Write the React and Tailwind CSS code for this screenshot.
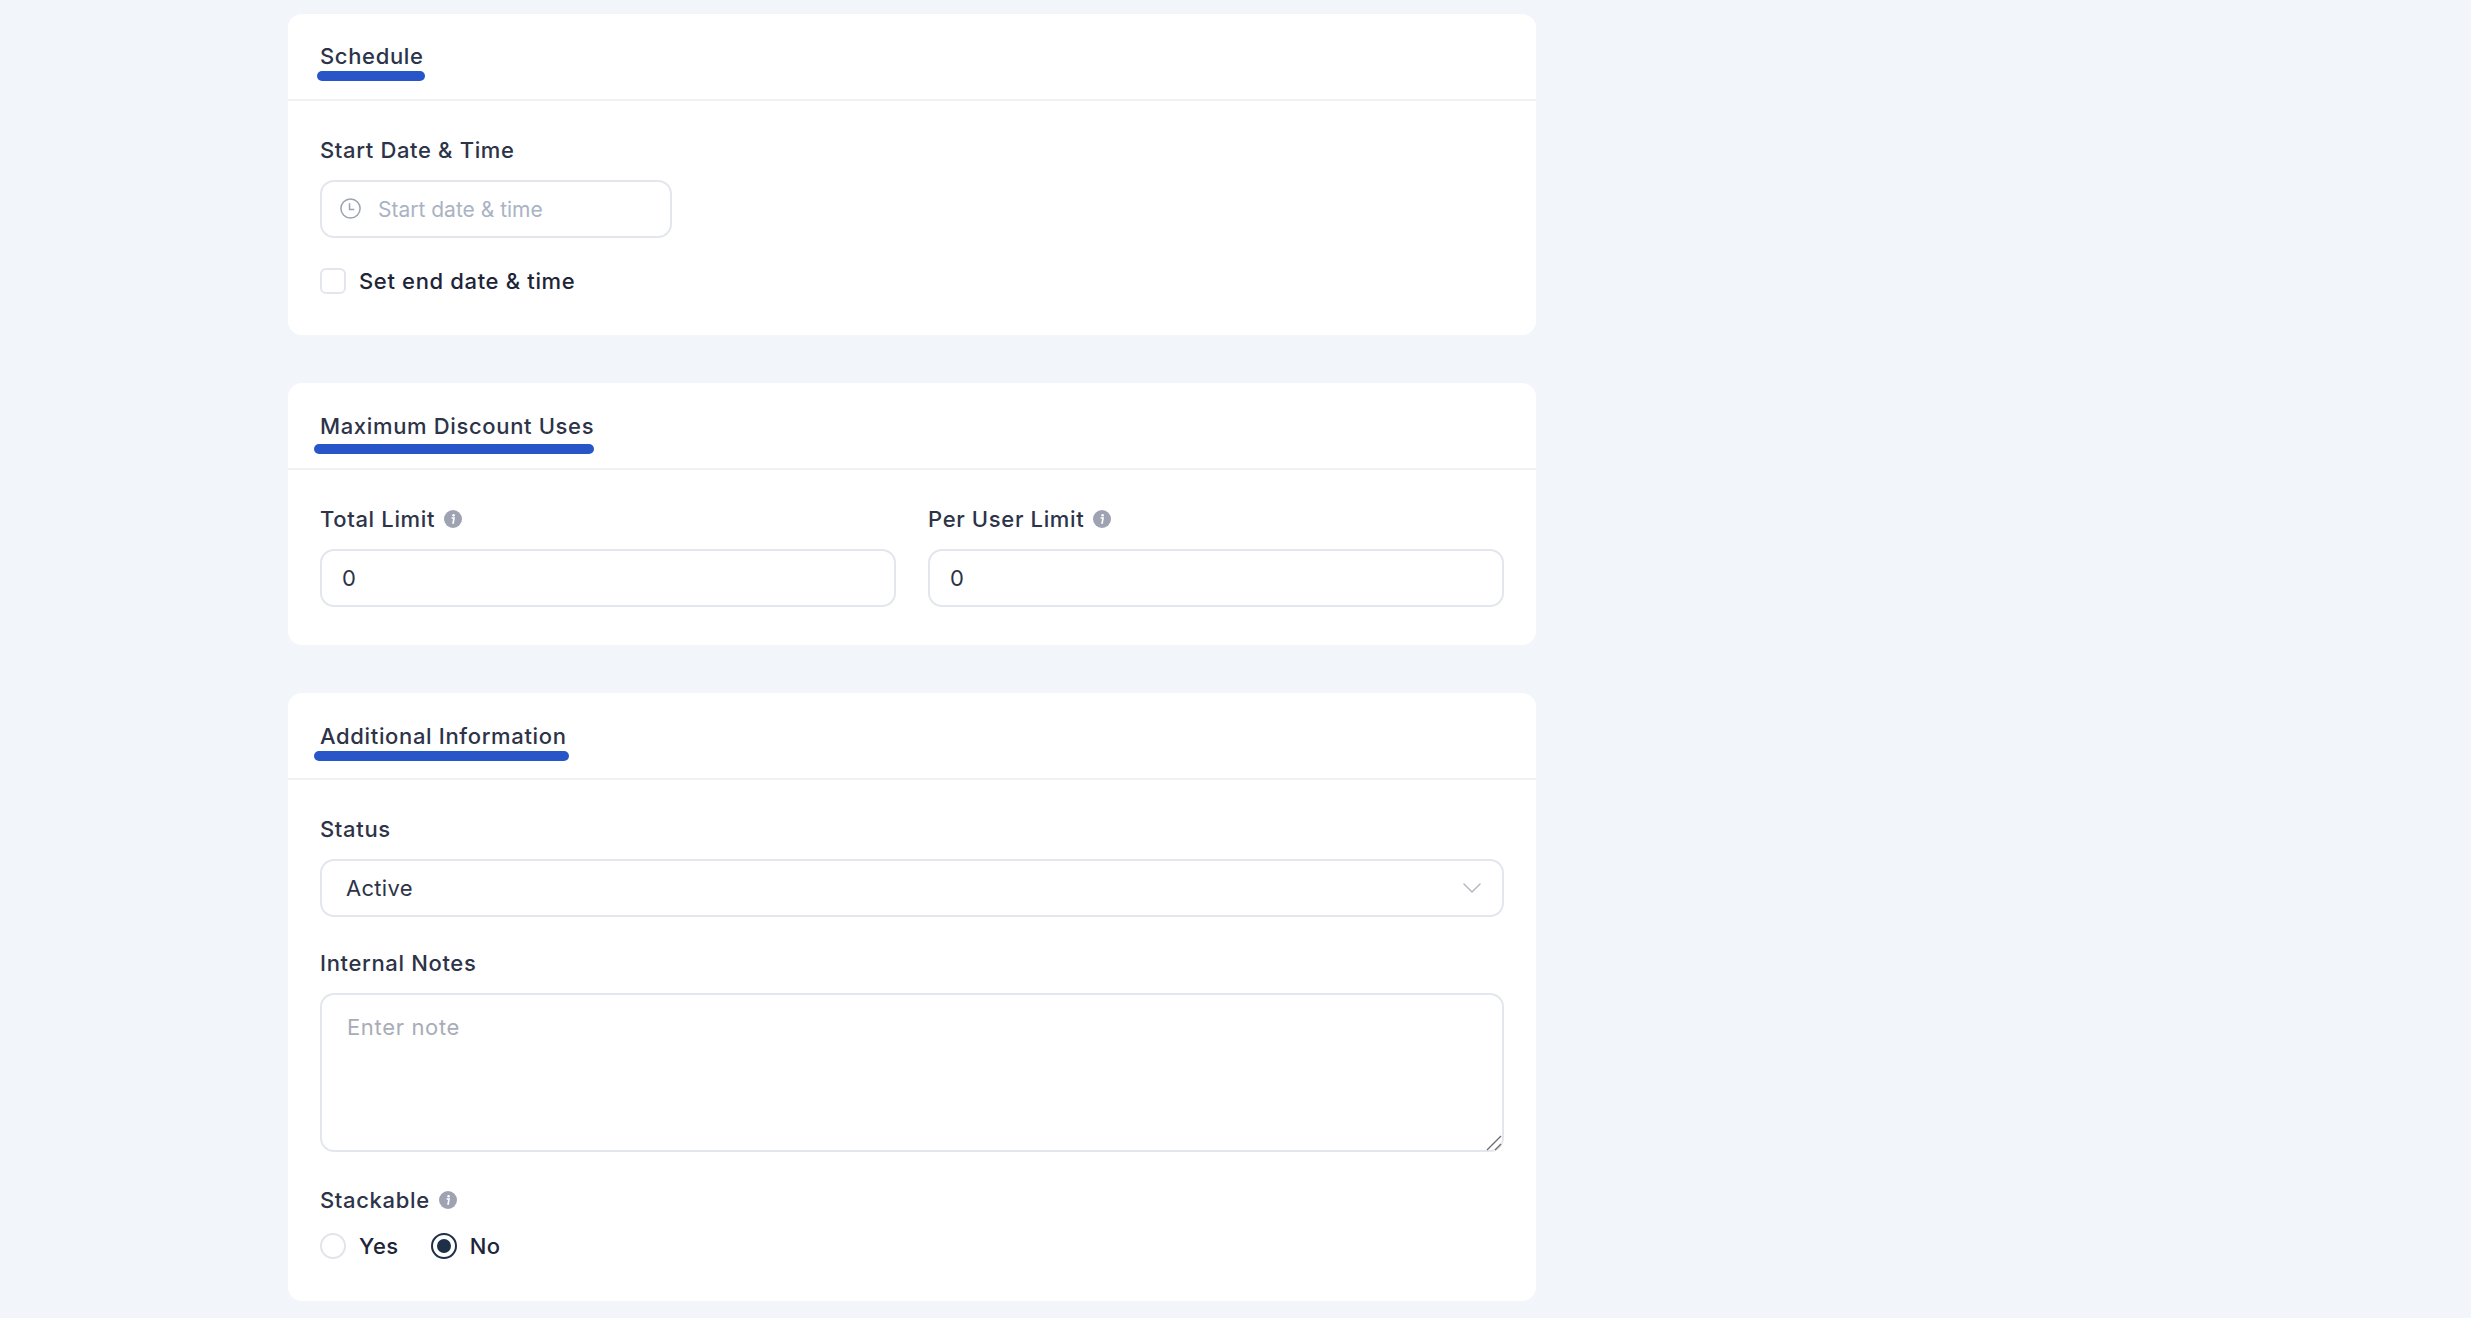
import React from "react";
import { ChevronDown } from "lucide-react";

function InfoIcon() {
  return (
    <svg viewBox="0 0 18 18" className="w-[18px] h-[18px] shrink-0 ml-[9px]">
      <circle cx="9" cy="9" r="9" fill="#9ea3b2" />
      <circle cx="9.6" cy="5.2" r="1.3" fill="#fff" />
      <path d="M7.6 8h2.5l-1 5h1" fill="none" stroke="#fff" strokeWidth="1.6" />
    </svg>
  );
}

function ClockIcon() {
  return (
    <svg
      viewBox="0 0 24 24"
      fill="none"
      stroke="#9ea3b2"
      strokeWidth="1.6"
      className="absolute left-[19px] top-[17px] w-[23px] h-[23px]"
    >
      <circle cx="12" cy="12" r="10" />
      <path d="M11 6.5v6.5h5" />
    </svg>
  );
}

function Label({ children, info, className = "" }) {
  return (
    <div className={`flex items-center h-7 text-[22px] font-medium tracking-[0.65px] text-[#2d3348] ${className}`}>
      <span>{children}</span>
      {info && <InfoIcon />}
    </div>
  );
}

function Card({ title, topClass, barClass, bottomClass, children }) {
  return (
    <section className="bg-white rounded-[14px]">
      <div className={`px-8 border-b-2 border-[#eff1f4] ${bottomClass}`}>
        <h2 className={`h-7 leading-7 text-[22px] font-medium tracking-[0.65px] text-[#2d3348] ${topClass}`}>{title}</h2>
        <div className={`h-[10px] rounded-full bg-[#2855c8] ${barClass}`} />
      </div>
      {children}
    </section>
  );
}

const inputClass =
  "block w-full rounded-[14px] border-2 border-[#e4e6ed] bg-white text-[#2d3348] outline-none";

function RadioOption({ label, checked }) {
  return (
    <label className="flex items-center gap-[13px] h-[26px] text-[22px] font-medium tracking-[0.5px] text-[#1e2538]">
      {checked ? (
        <span className="flex items-center justify-center w-[26px] h-[26px] rounded-full border-2 border-[#1e3048]">
          <span className="w-[14px] h-[14px] rounded-full bg-[#1e3048]" />
        </span>
      ) : (
        <span className="w-[26px] h-[26px] rounded-full border-2 border-[#e2e4ea]" />
      )}
      {label}
    </label>
  );
}

export default function App() {
  return (
    <div
      className="h-screen overflow-hidden bg-[#f2f5fa] pl-[288px] pt-[14px] text-[#2d3348]"
      style={{ fontFamily: "Inter, 'Noto Sans', sans-serif" }}
    >
      <div className="w-[1248px] flex flex-col gap-12">
        <Card
          title="Schedule"
          topClass="mt-7"
          barClass="mt-px w-[108px] -ml-[3px]"
          bottomClass="pb-[18px]"
        >
          <div className="px-8 pt-[35px] pb-[41px]">
            <Label>Start Date &amp; Time</Label>
            <div className="relative w-[352px] mt-4">
              <ClockIcon />
              <input
                className={`${inputClass} h-[58px] pl-14 text-[21px] placeholder:text-[#a9b3c4]`}
                placeholder="Start date & time"
              />
            </div>
            <label className="flex items-center gap-[13px] h-[26px] mt-[30px]">
              <span className="w-[26px] h-[26px] rounded-[6px] border-2 border-[#e4e6ed]" />
              <span className="text-[22px] font-medium tracking-[0.65px] text-[#1e2538]">Set end date &amp; time</span>
            </label>
          </div>
        </Card>

        <Card
          title="Maximum Discount Uses"
          topClass="mt-[29px]"
          barClass="mt-1 w-[280px] -ml-[6px]"
          bottomClass="pb-[14px]"
        >
          <div className="px-8 pt-[35px] pb-[38px] grid grid-cols-2 gap-8">
            <div>
              <Label info>Total Limit</Label>
              <input className={`${inputClass} h-[58px] mt-4 px-5 text-[22px]`} defaultValue="0" />
            </div>
            <div>
              <Label info>Per User Limit</Label>
              <input className={`${inputClass} h-[58px] mt-4 px-5 text-[22px]`} defaultValue="0" />
            </div>
          </div>
        </Card>

        <Card
          title="Additional Information"
          topClass="mt-[29px]"
          barClass="mt-px w-[255px] -ml-[6px]"
          bottomClass="pb-[17px]"
        >
          <div className="px-8 pt-[35px] pb-[42px]">
            <Label>Status</Label>
            <div className="relative mt-4">
              <select
                className={`${inputClass} h-[58px] appearance-none px-6 text-[22px] tracking-[0.3px]`}
                defaultValue="Active"
              >
                <option>Active</option>
                <option>Inactive</option>
              </select>
              <ChevronDown
                className="absolute right-4 top-[13px] w-8 h-8 text-[#b4b7c0]"
                strokeWidth={1.1}
              />
            </div>
            <Label className="mt-8">Internal Notes</Label>
            <div className="relative mt-4">
              <textarea
                className={`${inputClass} h-[159px] resize-none px-[25px] py-[16px] text-[22px] tracking-[0.65px] placeholder:text-[#a9acb6]`}
                placeholder="Enter note"
              />
              <svg
                viewBox="0 0 16 16"
                fill="none"
                stroke="#6e6e6e"
                strokeWidth="1.4"
                className="absolute right-[2px] bottom-[1px] w-4 h-4"
              >
                <path d="M1 15 15 1M9 15l6-6" />
              </svg>
            </div>
            <Label info className="mt-[34px]">Stackable</Label>
            <div className="flex gap-8 mt-[19px]">
              <RadioOption label="Yes" />
              <RadioOption label="No" checked />
            </div>
          </div>
        </Card>
      </div>
    </div>
  );
}
